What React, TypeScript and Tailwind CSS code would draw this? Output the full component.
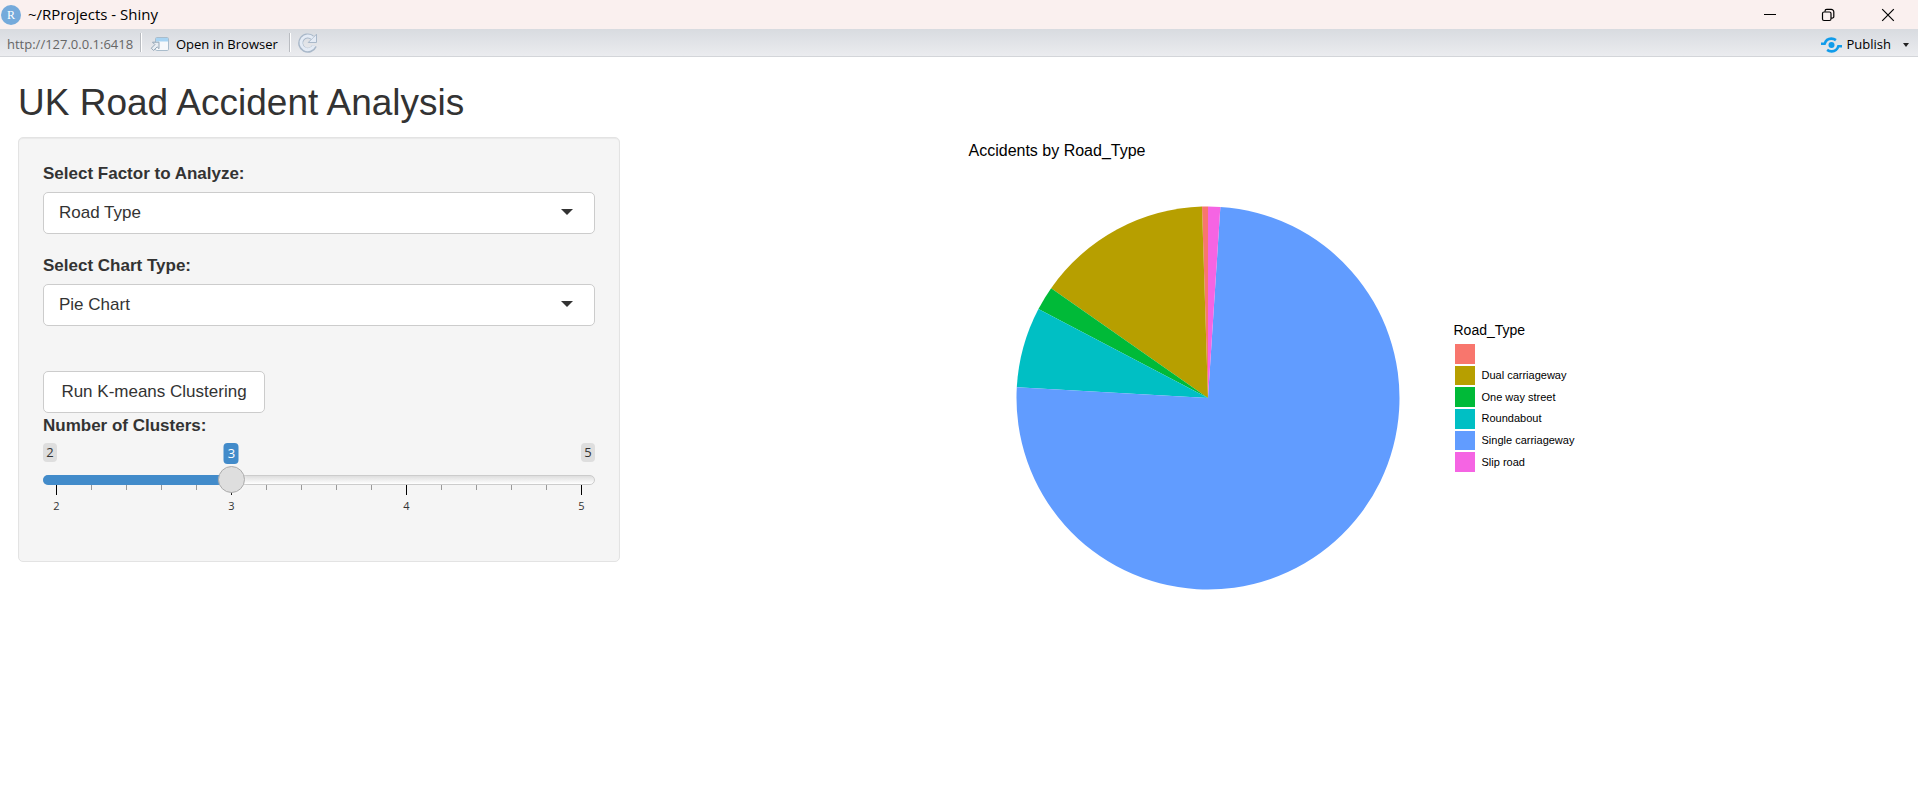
import { useState } from "react";

const ROAD_TYPES = [
  { label: "", color: "#F8766D", degrees: 1.8 },
  { label: "Dual carriageway", color: "#B79F00", degrees: 53.2 },
  { label: "One way street", color: "#00BA38", degrees: 7.3 },
  { label: "Roundabout", color: "#00BFC4", degrees: 24.5 },
  { label: "Single carriageway", color: "#619CFF", degrees: 269.5 },
  { label: "Slip road", color: "#F564E3", degrees: 3.7 },
];

const MIN = 2;
const MAX = 5;

function RLogo() {
  return (
    <span className="flex size-5 items-center justify-center rounded-full bg-[#75aadb] font-['Liberation_Serif',serif] text-xs leading-none text-white">
      R
    </span>
  );
}

function TitleBar() {
  return (
    <header className="flex h-[29px] items-center justify-between bg-[#faf0ef]">
      <div className="flex items-center gap-[7px] pl-px text-[15px] text-black">
        <RLogo />
        <span>~/RProjects - Shiny</span>
      </div>
      <div className="flex h-full text-black">
        <button type="button" aria-label="Minimize" className="flex w-[58px] items-center justify-center">
          <svg width="14" height="14" viewBox="0 0 14 14" stroke="currentColor" fill="none">
            <path d="M1 6.5h12" />
          </svg>
        </button>
        <button type="button" aria-label="Restore" className="flex w-[58px] items-center justify-center">
          <svg width="14" height="14" viewBox="0 0 14 14" stroke="currentColor" fill="none" strokeWidth="1.2">
            <rect x="1.5" y="4" width="8.5" height="8.5" rx="1.5" />
            <path d="M4 3.8V3.2a1.8 1.8 0 0 1 1.8-1.8h4.4a2.6 2.6 0 0 1 2.6 2.6v4.4a1.8 1.8 0 0 1-1.8 1.8h-.8" />
          </svg>
        </button>
        <button type="button" aria-label="Close" className="flex w-[61px] items-center justify-center">
          <svg width="14" height="14" viewBox="0 0 14 14" stroke="currentColor" fill="none" strokeWidth="1.2">
            <path d="M1.2 1.2l11.6 11.6M12.8 1.2L1.2 12.8" />
          </svg>
        </button>
      </div>
    </header>
  );
}

function Divider() {
  return <span className="h-[19px] w-[2px] border-l border-[#b9bcc1] bg-white" />;
}

function Toolbar() {
  return (
    <nav className="flex h-[28px] items-center justify-between border-b border-[#d3d5d9] bg-linear-to-b from-[#d8dbe0] to-[#ebecef] text-[13px]">
      <div className="flex items-center pl-[7px]">
        <span className="w-[133px] pt-1 text-[#666]">http://127.0.0.1:6418</span>
        <Divider />
        <button type="button" className="flex items-center gap-[6px] pt-1 pr-[11px] pl-[8px] text-black">
          <svg width="20" height="16" viewBox="0 0 20 16" fill="none">
            <rect x="5.5" y="0.5" width="13" height="13" rx="1.2" fill="#f7f9fb" stroke="#a9bccb" />
            <path d="M6 1h12v3.500H6z" fill="#a8d4f3" />
            <path d="M2.500 5.200H9v6.500L7.200 9.900l-3.600 3.600-2.300-2.300 3.600-3.600z" fill="#e9eef3" stroke="#93a5b5" />
          </svg>
          Open in Browser
        </button>
        <Divider />
        <button type="button" aria-label="Reload" className="pl-[7px]">
          <svg width="20" height="20" viewBox="0 0 20 20" fill="none">
            <path d="M16.500 12.900A7.200 7.200 0 1 1 14.200 4.400" stroke="#a9b8c9" strokeWidth="5" />
            <path d="M18.500 1.200v8.300H10.200z" fill="#e4ebf5" stroke="#a9b8c9" strokeLinejoin="round" />
            <path d="M16 12.600A6.800 6.800 0 1 1 14.600 5" stroke="#e4ebf5" strokeWidth="3" />
          </svg>
        </button>
      </div>
      <button type="button" className="flex items-center pt-1 pr-[9px] text-black">
        <svg width="21" height="16" viewBox="0 0 21 16" fill="none" stroke="#119cea" strokeWidth="2.600">
          <circle cx="10.500" cy="8" r="3" fill="#119cea" stroke="none" />
          <path d="M0 6.800H3.600C4.600 3.600 7.200 1.600 10.300 1.600c1.800 0 3.300.5 4.600 1.500" />
          <path d="M21 9.200H17.400C16.400 12.400 13.800 14.400 10.700 14.400c-1.800 0-3.300-.5-4.600-1.500" />
        </svg>
        <span className="mr-3 ml-[5px]">Publish</span>
        <svg width="6" height="4" viewBox="0 0 6 4" fill="#222">
          <path d="M0 0h6L3 4z" />
        </svg>
      </button>
    </nav>
  );
}

function SelectField({ id, label, options }: { id: string; label: string; options: string[] }) {
  return (
    <div className="mb-[19px]">
      <label htmlFor={id} className="mb-[6px] block font-bold">
        {label}
      </label>
      <div className="relative">
        <select
          id={id}
          className="block h-[42px] w-full appearance-none rounded-[5px] border border-[#ccc] bg-white pr-10 pb-[2px] pl-[15px]"
        >
          {options.map((option) => (
            <option key={option}>{option}</option>
          ))}
        </select>
        <svg
          className="pointer-events-none absolute top-[17px] right-[22px]"
          width="12"
          height="6"
          viewBox="0 0 12 6"
          fill="#333"
        >
          <path d="M0 0h12L6 6z" />
        </svg>
      </div>
    </div>
  );
}

function ClusterSlider() {
  const [value, setValue] = useState(3);
  const ratio = (value - MIN) / (MAX - MIN);
  const center = `calc(13.5px + (100% - 27px) * ${ratio})`;
  const ticks = Array.from({ length: 16 }, (_, i) => i);

  return (
    <div>
      <label htmlFor="clusters" className="mb-[5px] block font-bold">
        Number of Clusters:
      </label>
      <div className="font-['Open_Sans',sans-serif]">
        <div className="relative mb-[10px] flex h-[22px] items-start justify-between text-[13px] leading-[19px]">
          <span className="w-[14px] rounded bg-[#dedede] text-center">{MIN}</span>
          <span
            className="absolute top-0 w-[15px] -translate-x-1/2 rounded bg-[#428bca] text-center leading-[21px] text-white"
            style={{ left: center }}
          >
            {value}
          </span>
          <span className="w-[14px] rounded bg-[#dedede] text-center">{MAX}</span>
        </div>
        <div className="relative">
          <div className="h-[10px] rounded-full border border-[#ccc] bg-linear-to-b from-[#dedede] to-white" />
          <div className="absolute top-0 left-0 h-[10px] rounded-l-full bg-[#428bca]" style={{ width: center }} />
          <input
            id="clusters"
            type="range"
            min={MIN}
            max={MAX}
            value={value}
            onChange={(e) => setValue(Number(e.target.value))}
            className="absolute -top-[10px] left-0 z-10 h-[28px] w-full cursor-pointer appearance-none bg-transparent [&::-webkit-slider-thumb]:size-[27px] [&::-webkit-slider-thumb]:appearance-none [&::-webkit-slider-thumb]:rounded-full [&::-webkit-slider-thumb]:border [&::-webkit-slider-thumb]:border-[#ababab] [&::-webkit-slider-thumb]:bg-[#dedede] [&::-webkit-slider-thumb]:shadow-[1px_1px_3px_rgba(255,255,255,0.3)]"
          />
        </div>
        <div className="flex h-[10px] items-start justify-between px-[13px]">
          {ticks.map((i) => (
            <span key={i} className={i % 5 === 0 ? "h-[10px] w-px bg-black" : "h-[5px] w-px bg-[#999]"} />
          ))}
        </div>
        <div className="flex justify-between pt-1 text-[11px] leading-[14px]">
          {[2, 3, 4, 5].map((n) => (
            <span key={n} className="w-[27px] text-center">
              {n}
            </span>
          ))}
        </div>
      </div>
    </div>
  );
}

function PieChart() {
  const point = (deg: number) => {
    const rad = (deg * Math.PI) / 180;
    return `${239 - 191.5 * Math.sin(rad)} ${239 - 191.5 * Math.cos(rad)}`;
  };
  const slices = ROAD_TYPES.map((slice, i) => {
    const start = ROAD_TYPES.slice(0, i).reduce((sum, s) => sum + s.degrees, 0);
    const end = start + slice.degrees;
    const large = slice.degrees > 180 ? 1 : 0;
    return { color: slice.color, d: `M239 239L${point(start)}A191.5 191.5 0 ${large} 0 ${point(end)}Z` };
  });
  return (
    <svg viewBox="0 0 478 478" className="block w-[478px]" role="img" aria-label="Accidents by Road_Type">
      {slices.map((slice) => (
        <path key={slice.color} d={slice.d} fill={slice.color} />
      ))}
    </svg>
  );
}

function Legend() {
  return (
    <section className="w-[136px] pt-[22px]">
      <h3 className="mb-[6px] text-sm leading-4">Road_Type</h3>
      <ul className="grid h-[130px] grid-rows-6 pl-px text-[11px]">
        {ROAD_TYPES.map((type) => (
          <li key={type.color} className="flex items-center gap-[7px] pb-[2px] whitespace-nowrap">
            <span className="h-full w-5" style={{ backgroundColor: type.color }} />
            {type.label}
          </li>
        ))}
      </ul>
    </section>
  );
}

export default function App() {
  return (
    <div className="min-h-screen bg-white font-['Open_Sans',sans-serif]">
      <TitleBar />
      <Toolbar />
      <main className="px-[18px] pt-[25px] font-['Liberation_Sans',Arial,sans-serif] text-[17px] leading-[25px] text-[#333]">
        <h1 className="mb-[13px] text-[37px] leading-[42px]">UK Road Accident Analysis</h1>
        <div className="grid grid-cols-3 gap-[38px]">
          <form className="h-fit rounded-[5px] border border-[#e3e3e3] bg-[#f5f5f5] px-6 pt-[23px] pb-12 shadow-[inset_0_1px_1px_rgba(0,0,0,0.05)]">
            <SelectField id="factor" label="Select Factor to Analyze:" options={["Road Type"]} />
            <SelectField id="chart" label="Select Chart Type:" options={["Pie Chart"]} />
            <button
              type="button"
              className="mt-[45px] block h-[42px] w-[222px] rounded-[5px] border border-[#ccc] bg-white pb-[2px]"
            >
              Run K-means Clustering
            </button>
            <ClusterSlider />
          </form>
          <figure className="col-span-2 flex items-center justify-center gap-[7px] text-black">
            <div>
              <figcaption className="pt-[6px] text-base leading-4">Accidents by Road_Type</figcaption>
              <PieChart />
            </div>
            <Legend />
          </figure>
        </div>
      </main>
    </div>
  );
}
